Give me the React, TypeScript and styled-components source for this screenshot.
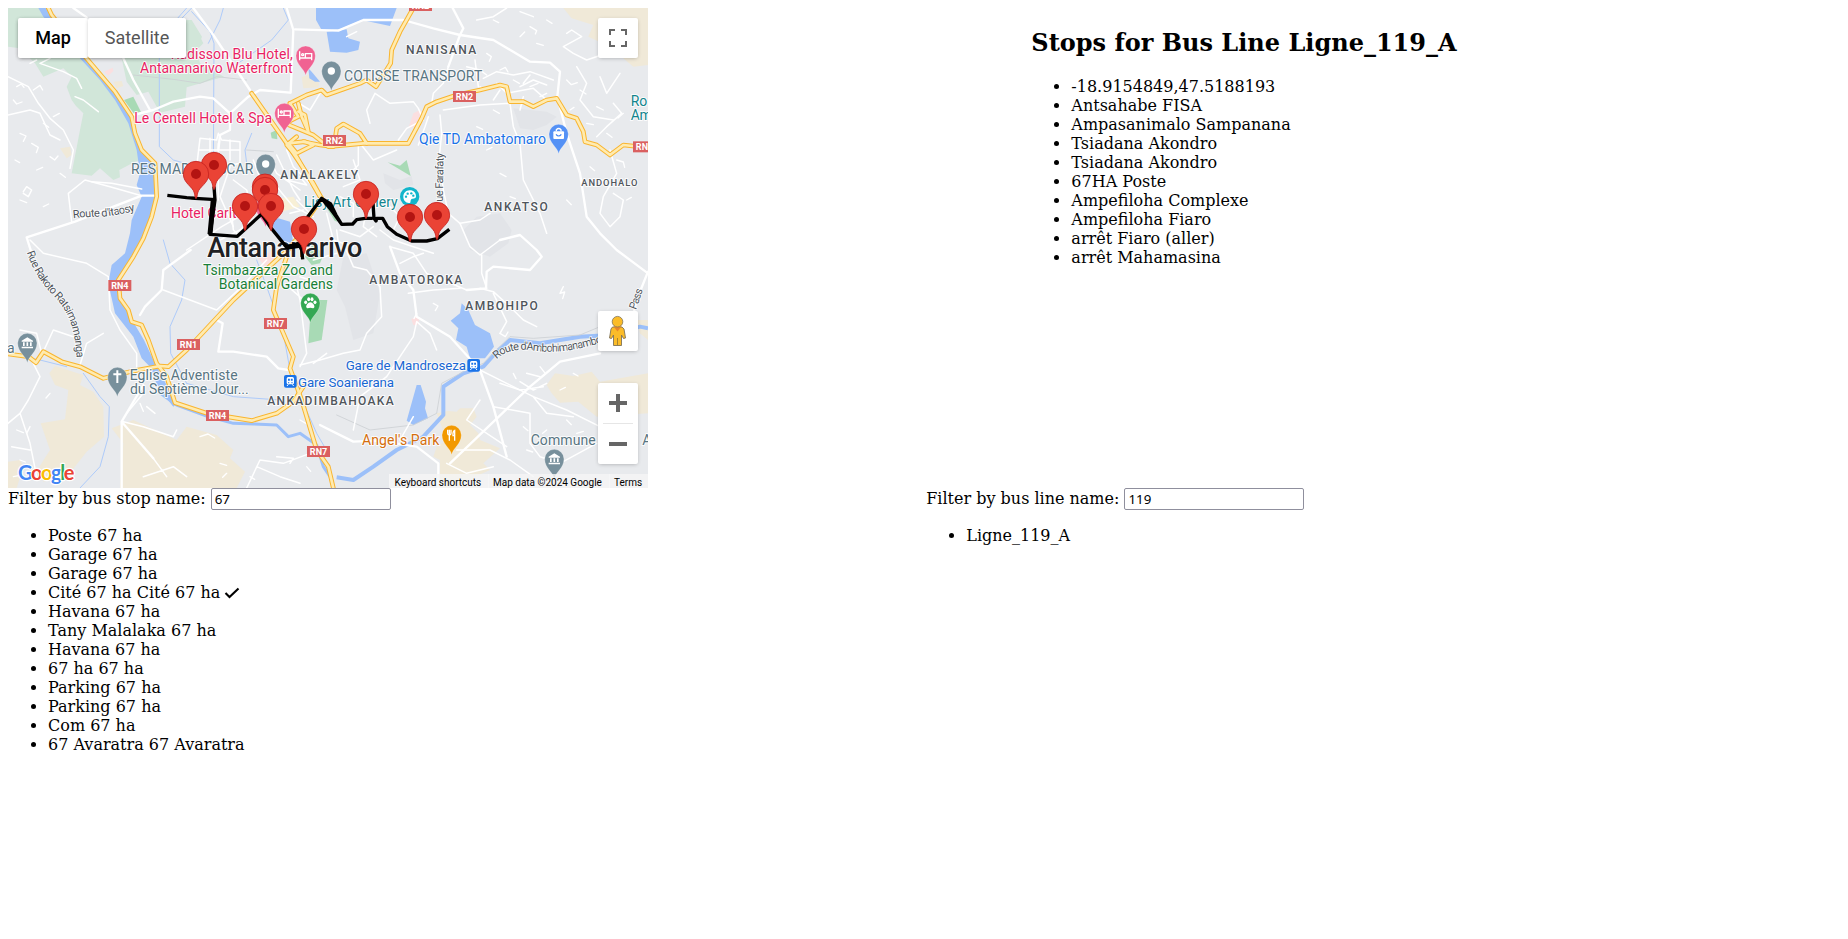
import React from "react";
import styled, { createGlobalStyle } from "styled-components";

const GlobalStyle = createGlobalStyle`
  body {
    margin: 8px;
    background: #fff;
    color: #000;
    font-family: "DejaVu Serif", serif;
    font-size: 16px;
    line-height: 19px;
  }
`;

const Row = styled.div`
  display: flex;
  align-items: flex-start;
`;

const CenteredColumn = styled.section`
  margin: 0 auto;
`;

const Column = styled.section``;

const Title = styled.h2`
  margin: 21px 0 20px;
  font-size: 24px;
  line-height: 28px;
  font-weight: 700;
`;

const List = styled.ul`
  margin: 16px 0;
  padding-left: 40px;
`;

const Item = styled.li`
  height: 19px;
  white-space: nowrap;
`;

const FilterLabel = styled.label`
  display: flex;
  align-items: flex-start;
  gap: 5px;
  height: 22px;
  line-height: 21px;
  white-space: nowrap;
`;

const FilterInput = styled.input`
  box-sizing: border-box;
  width: 180px;
  height: 22px;
  padding: 0 3px 1px;
  border: 1px solid #8f8f9d;
  border-radius: 2px;
  outline: 0;
  background: #fff;
  color: #000;
  font: 13.33px "Noto Sans", sans-serif;
`;

const CheckIcon = styled.svg`
  width: 16px;
  height: 16px;
  margin-left: 4px;
  vertical-align: -3px;
`;

const MapFrame = styled.div`
  position: relative;
  flex: none;
  width: 640px;
  height: 480px;
  overflow: hidden;
  background: #e8eaed;
  font-family: Roboto, sans-serif;
`;

const MapCanvas = styled.svg`
  display: block;
  width: 640px;
  height: 480px;
  font-family: Roboto, sans-serif;
`;

const MapControl = styled.div<{ $top: number; $height?: number }>`
  position: absolute;
  top: ${(p) => p.$top}px;
  right: 10px;
  display: flex;
  flex-direction: column;
  align-items: center;
  width: 40px;
  height: ${(p) => p.$height ?? 40}px;
  border-radius: 2px;
  background: #fff;
  box-shadow: 0 1px 4px -1px rgba(0, 0, 0, 0.3);
`;

const ControlIcon = styled.svg`
  flex: none;
  width: 40px;
  height: 40px;
`;

const ControlDivider = styled.div`
  flex: none;
  width: 30px;
  height: 1px;
  background: #e6e6e6;
`;

const TypeSwitch = styled.div`
  position: absolute;
  top: 10px;
  left: 10px;
  display: flex;
  height: 40px;
  border-radius: 2px;
  box-shadow: 0 1px 4px -1px rgba(0, 0, 0, 0.3);
`;

const TypeButton = styled.button<{ $active?: boolean; $width: number }>`
  width: ${(p) => p.$width}px;
  padding: 0 0 2px;
  border: 0;
  border-radius: 2px;
  background: #fff;
  box-shadow: 0 1px 4px -1px rgba(0, 0, 0, 0.3);
  color: ${(p) => (p.$active ? "#000" : "#565656")};
  font: ${(p) => (p.$active ? 500 : 400)} 18px Roboto, sans-serif;
`;

const Attribution = styled.div`
  position: absolute;
  right: 0;
  bottom: 0;
  display: flex;
  height: 14px;
  font-size: 10px;
  line-height: 17px;
`;

const AttributionCell = styled.span<{ $width: number }>`
  box-sizing: border-box;
  width: ${(p) => p.$width}px;
  height: 14px;
  padding-left: 5.5px;
  background: rgba(245, 245, 245, 0.8);
  box-shadow: inset 1px 0 rgba(255, 255, 255, 0.25);
  color: #000;
  white-space: nowrap;
`;

const busStops = [
  "-18.9154849,47.5188193",
  "Antsahabe FISA",
  "Ampasanimalo Sampanana",
  "Tsiadana Akondro",
  "Tsiadana Akondro",
  "67HA Poste",
  "Ampefiloha Complexe",
  "Ampefiloha Fiaro",
  "arrêt Fiaro (aller)",
  "arrêt Mahamasina",
];

const filteredStops = [
  { name: "Poste 67 ha" },
  { name: "Garage 67 ha" },
  { name: "Garage 67 ha" },
  { name: "Cité 67 ha Cité 67 ha", selected: true },
  { name: "Havana 67 ha" },
  { name: "Tany Malalaka 67 ha" },
  { name: "Havana 67 ha" },
  { name: "67 ha 67 ha" },
  { name: "Parking 67 ha" },
  { name: "Parking 67 ha" },
  { name: "Com 67 ha" },
  { name: "67 Avaratra 67 Avaratra" },
];

/* The map is drawn in units of a third of a pixel. */

const parks = [
  "M24 24H130L165 60L250 150L300 215L345 275L400 350L425 480L405 485L358 510L360 532L340 540L300 505L275 527L215 520L240 390L250 340L228 318L215 300L200 260L215 230L190 205L130 230L105 190L60 145L24 140Z",
  "M365 175L515 150L600 110L610 130L590 150L600 190L672 230L560 262L555 320L480 338L445 275L410 285L380 245Z",
  "M370 175H540V60L575 60L606 110L590 150L500 190L420 185Z",
];
const sands = [
  "M148 1120L165 1098L250 1125L240 1155L280 1175L310 1220L312 1310L260 1355L205 1425L130 1445L118 1400L150 1350L122 1270L195 1258L205 1170L165 1155Z",
  "M335 1285L400 1260L530 1320L560 1280L650 1305L700 1350L690 1375L735 1415L710 1464H360L370 1330Z",
  "M24 1385L60 1380L70 1400L50 1464H24Z",
  "M1690 24H1944V195L1900 200L1830 140L1765 110L1780 75L1715 55Z",
  "M1640 1155L1665 1120L1720 1128L1775 1115L1800 1145L1944 1120V1240L1790 1250L1735 1205L1680 1208L1655 1180Z",
  "M1310 1240L1345 1233L1370 1235L1380 1225L1420 1225L1430 1250L1410 1275L1435 1300L1440 1320L1500 1345L1450 1390L1470 1410L1350 1464H1320V1380L1300 1370L1310 1340L1340 1320Z",
  "M1910 960H1944V1020L1920 1000Z",
  "M180 445L210 440L215 465L200 475Z",
  "M340 245L365 243L370 258L350 265Z",
  "M905 232L935 220L957 250L955 262L910 265Z",
];
const greens = [
  "M372 300L400 290L425 340L405 345Z",
  "M812 398L830 390L832 418L815 415Z",
  "M1163 487L1200 497L1220 480L1232 528Z",
  "M955 900L982 900L965 1020L925 1030L930 960Z",
  "M915 770L940 730L970 765L960 790L935 795Z",
  "M978 620L990 625L1012 665L1004 662Z",
];
const shades = [
  "M1540 325L1640 335L1670 350L1640 375L1600 390L1560 385Z",
  "M1390 690L1430 650L1500 640L1535 690L1525 730L1470 770L1410 750Z",
  "M1030 770L1100 760L1140 880L1120 1000L1060 1020L1035 920L1010 870Z",
  "M1150 520L1200 540L1235 528L1240 555L1180 570L1155 550Z",
];
const water = [
  "M948 24H1190L1170 78L1085 60L1020 88L965 90L948 60Z",
  "M980 95L1040 88L1045 115L1080 125L1075 150L1040 158L990 155Z",
  "M925 205L935 215L960 245L945 245L928 235Z",
  "M808 665L835 655L870 665L880 730L850 725Z",
  "M1385 910L1405 930L1425 975L1470 1000L1482 1040L1455 1075L1410 1075L1400 1040L1368 1020L1375 985L1352 962L1380 940Z",
  "M1250 1155L1262 1155L1278 1205L1275 1225L1284 1255L1240 1275L1220 1262Z",
  "M115 24H145L155 45L210 115L268 185L345 275L395 350L405 400L425 450L465 490L470 590L455 650L430 715L400 770L355 840L360 895L375 910L402 970L432 1020L470 1100L530 1210L520 1220L475 1165L450 1100L425 1075L400 1010L345 940L325 850L335 795L375 760L390 700L395 660L425 590L410 555L420 520L410 450L385 370L345 300L300 240L240 175L190 115L130 50Z",
];
const rivers = [
  { d: "M475 1175L530 1215L620 1248L700 1270L760 1272L830 1275L865 1310L900 1300L950 1335L970 1400L990 1430", w: 9 },
  { d: "M1010 1432L1060 1440L1120 1400L1190 1350L1270 1310L1330 1245L1330 1160L1390 1120L1450 1100L1490 1055L1530 1020L1620 1030L1740 1010L1830 1005L1920 980L1944 985", w: 12 },
];
const streams = [
  "M575 35L630 95L642 130L640 500L645 625",
  "M575 24L478 125V440L520 480L590 500",
  "M560 24L475 120",
  "M850 24L865 60L815 120L700 200",
  "M740 490L735 450L755 400",
  "M490 720L510 790L555 840L545 900L510 980L512 1060L560 1150",
  "M560 1150L700 1190L840 1200",
  "M770 780L800 860L850 1000L870 1110",
  "M250 1120L300 1190L328 1220L325 1310L300 1400L240 1464",
  "M24 1060L120 1080L200 1100",
  "M910 1210L950 1300L985 1360",
  "M625 130L660 60L670 24",
];
const majorRoads = [
  "M220 24L260 52M370 175L400 240L450 330",
  "M400 345L460 330L520 305L600 290L640 295L690 340L745 290L780 270L870 278",
  "M580 24L640 105L750 270",
  "M860 24L880 90L872 278",
  "M885 88L1015 92L1090 60L1210 60L1300 85L1380 105L1480 120L1590 185L1650 188L1680 215L1672 290L1700 400L1740 520L1760 650L1800 700L1850 750L1944 820",
  "M1358 24L1390 85L1380 105L1345 200",
  "M470 587L425 587L225 665L80 712L95 760",
  "M572 750L490 810L485 870L435 920L420 945",
  "M650 960L668 970L655 1055L700 1055L800 1070L835 1105L865 1110",
  "M1170 740L1200 820L1240 870L1250 950L1350 1010L1440 1110L1480 1220L1520 1370",
  "M1944 815L1910 900L1900 945M1350 1390L1590 1160L1680 1085L1800 1060",
  "M960 1275L1010 1300L1060 1325L1130 1322L1250 1340L1315 1390V1464",
  "M690 340V390L660 405L655 450",
  "M1500 720L1560 705L1610 750L1625 770L1590 810L1480 800L1460 815L1458 865L1400 870",
  "M365 1265L430 1155M365 1265V1464M365 1265L460 1375",
];
const mediumRoads = [
  "M90 720L130 760L260 790L325 830L330 930L360 990L410 1060V1100",
  "M490 870L570 900L650 930L720 865L800 780",
  "M215 665L205 580L255 540L330 560L425 587",
  "M275 545L335 550L425 567",
  "M210 505L220 450L190 390L150 355L115 310L85 260L24 230",
  "M150 175L120 190L190 215L230 235L245 265M110 180L90 190M225 290L250 300L295 335",
  "M24 345L90 330L120 340L150 405L180 420M70 575L80 560L95 570L85 590L70 580",
  "M590 500L600 415L650 420L655 400L665 420L720 425V490L670 500L600 490M630 415V500M690 420V480M655 430V600M595 450H720",
  "M600 490L590 550M690 500L660 590L700 680",
  "M735 640L665 680L560 750M695 640L700 690L760 750M660 720L720 690L760 650",
  "M860 450L880 500L940 560M830 465L880 570L900 600M810 480L830 520L900 570M860 540L920 555L900 530",
  "M1075 435V495L1060 510M1255 435L1275 380L1285 350M1320 345L1325 400L1318 470L1330 570L1345 640L1380 670",
  "M1125 280L1100 330L1110 370M1125 280L1170 310L1240 305L1255 325L1270 360L1220 385L1195 420",
  "M1425 180L1435 260M1345 200L1330 250L1300 280L1295 310",
  "M1400 200L1440 210L1460 225M1330 330L1440 315L1530 310L1540 380L1560 430L1570 540L1620 640L1640 700",
  "M1450 235L1490 215L1540 225L1590 215L1660 240M1490 250L1520 280L1600 265L1640 300",
  "M1700 100L1715 90L1745 110L1690 140L1720 160L1760 180L1820 160M1730 200L1760 250L1740 300L1780 350L1840 360",
  "M1840 310L1865 340L1820 380L1790 410M1800 230L1820 280L1860 220",
  "M1830 450L1850 520L1810 590L1800 640L1830 680L1860 650L1870 600L1840 580",
  "M1380 670L1440 660L1470 640M1380 670L1410 740L1440 765L1500 720",
  "M1445 765V820L1460 865M1440 865L1480 875L1530 920L1570 960L1610 980M1480 880L1520 965L1500 1000",
  "M1030 730L1060 800L1100 810L1140 860L1145 950L1100 1000L1080 1050L1030 1060L960 1080L900 1095",
  "M1170 740L1240 760L1280 820L1400 870M1225 880L1300 870L1380 865M1200 790L1240 770L1270 760",
  "M1250 965L1240 1010L1160 1130L1080 1190L1060 1290M1250 965L1290 1000L1310 1050",
  "M1200 1320L1240 1250M1440 1110L1600 1190L1700 1230L1800 1280M1600 1190L1640 1240L1720 1250",
  "M1480 1220L1590 1240V1330L1620 1370L1680 1390L1790 1330M1440 1200L1400 1260L1520 1340",
  "M1560 1145L1600 1170L1640 1150M1580 1120L1620 1130M1500 1150L1560 1170L1630 1160",
  "M1340 1390L1400 1420L1480 1400M1370 1350L1470 1350L1530 1380L1600 1430",
  "M125 1060L110 1000L60 990M130 1055L160 990L220 1010M240 1095L260 1030L310 1000",
  "M100 1090L120 1130L85 1200L60 1240L24 1270M60 1240L90 1330L110 1430M35 1340L90 1350",
  "M370 1265L430 1280L520 1310L530 1290M380 1240L430 1180M440 1220L465 1240",
  "M460 1375L500 1430M430 1430L520 1400L560 1430M740 1464L780 1380L850 1390L930 1360M770 1400L840 1430L900 1450M830 1370L880 1375L870 1390",
  "M885 840L900 900L920 1060L900 1100M865 860L910 900M940 1090L980 1060",
  "M700 540L740 570L760 640M760 480L790 560M830 560L880 620L940 650M870 640L910 630",
  "M1020 590L1060 610L1060 650M1060 580L1100 620L1090 680L1130 710M1120 680L1080 710L1020 690",
  "M1140 690L1180 720L1240 740L1300 760M1170 620L1200 650L1180 690M1060 480L1080 540L1030 560",
  "M960 280L930 330L880 300M1040 110L1070 95M1430 60L1480 50L1520 24M1560 35L1600 50",
  "M1560 260L1600 240L1640 255M1570 290L1560 330M1590 225L1570 250M1500 270L1480 300",
  "M980 640L1000 720L1060 740M1010 690L1020 770M940 780L1010 760M1080 430L1120 480L1190 450M890 600L930 640M900 830L960 850",
];
const scatter = [
  "M50 260l14-8l8 10M40 300l10 12l16-6M100 270l20-14l8 14M60 400l18 8l-8 16M130 370l16 12M160 350l18-10M95 430l20 12l-6 16M45 480l14 8M150 470l14 10l10-12M110 510l18-8M180 520l16 12M60 600l20 8M130 620l16-8",
  "M1480 60l16 8M1590 80l20 12l-4 10M1640 60l16 10M1560 110l14-14M1610 130l20 6M1460 160l14 10l-6 14M1500 210l16-8l8 14M1540 240l18 10M1590 260l24-10M1440 260l14 10M1620 290l20-10M1480 330l18 10M1430 380l18 8M1460 450l16-8M1500 520l18 10M1530 590l16 6",
  "M1700 240l14 14l18-6M1740 270l18 12M1790 320l20 10M1710 330l12-8M1760 370l20 4M1820 400l16 12M1870 340l-16 14M1850 480l20 6l4 16M1770 500l14 12M1800 540l20 2M1700 600l14 14M1880 600l14-8",
  "M1690 860l-10 20l14-4l-6 20M1300 910l14 8l-8 14M1250 940l-8 16M1500 1000l16 10l8-14M1540 1120l8 16M1620 1100l14 18M1680 1170l16-8M1720 1120l14 8M1570 1280l14 12M1640 1290l-12 10M1700 1260l14 14M1730 1300l20-6M1580 1350l18 6",
  "M50 1290l20 8M90 1280l-10 20M60 1380l16 6M40 1430l20-4M150 1180l-12 14M420 1210l10 24M520 1190l10 12M600 1310l24-8l20 12M660 1390l20 6M680 1420l-12 12M750 1430l14 8M920 1400l12 14M900 1260l28 16",
];
const highways = [
  "M145 24L155 45L210 115L268 185L345 275L395 350L405 400L425 450L465 490L470 590L455 650L430 715L400 770L355 840L360 895L385 930L395 965L425 975L445 1020L470 1090L500 1130L525 1208L620 1240L755 1262L830 1240L880 1205L910 1160",
  "M24 1062L85 1070L108 1088L130 1055L185 1085L240 1100L310 1135L390 1115L480 1098L505 1100L560 1050L700 900L840 770L870 745",
  "M860 770L830 860L820 930L850 1000L880 1070L870 1105L905 1200L950 1350L985 1400L1000 1464",
  "M755 280L860 430L940 550L965 595",
  "M890 410L860 435L890 470L925 530L960 590",
  "M870 310L920 285L965 270L980 285L1080 250L1100 240L1128 260L1172 190L1175 150L1200 95L1240 24",
  "M870 310L895 350L855 370L940 405L985 440L1090 430L1225 430L1265 355L1280 320L1310 305L1370 285L1440 270L1500 255L1520 260L1530 305L1570 305L1600 320L1640 300L1670 295L1700 345L1730 355L1750 395L1755 425L1790 435L1830 465L1870 435L1944 443",
  "M1005 420L1010 385L1030 372L1080 400L1100 430",
  "M865 430L915 425L940 435L890 460Z",
  "M1000 440L960 435L910 425",
  "M895 310L905 350L925 395L915 345L895 335",
  "M920 660L965 595M870 740L905 700",
];

const busRoute =
  "M502 586L560 593L585 595L635 598L648 600M642 560L645 600L630 703L712 709L785 642L810 680L860 742L895 730L905 750L908 778M905 750L900 690L920 655L965 595L990 625L1025 673L1058 672L1070 659L1095 655L1118 655M965 595L992 612L1008 645L1025 673M1119 610L1122 655L1128 663L1130 655L1148 655L1162 680L1190 703L1235 723L1280 723L1312 716L1348 688";

const shields = [
  { text: "RN2", x: 1227, y: 0 },
  { text: "RN2", x: 1359, y: 273 },
  { text: "RN2", x: 969, y: 405 },
  { text: "RN2", x: 1899, y: 424 },
  { text: "RN4", x: 325, y: 840 },
  { text: "RN1", x: 531, y: 1017 },
  { text: "RN7", x: 792, y: 954 },
  { text: "RN4", x: 618, y: 1230 },
  { text: "RN7", x: 921, y: 1338 },
];

type MapLabel = { text: string; x: number; to: number; y: number; size?: number; color: string; weight?: number };

const PINK = "#e91e63";
const SLATE = "#587582";
const TEAL = "#12858d";
const AREA = "#4f555b";

const labels: MapLabel[] = [
  { text: "Radisson Blu Hotel,", x: 512, to: 878, y: 178, color: PINK },
  { text: "Antananarivo Waterfront", x: 420, to: 878, y: 219, color: PINK },
  { text: "Le Centell Hotel & Spa", x: 403, to: 816, y: 370, color: PINK },
  { text: "RES MADAGASCAR", x: 393, to: 760, y: 522, color: SLATE },
  { text: "Hotel Carlton", x: 513, to: 756, y: 655, color: PINK },
  { text: "Lisy Art Gallery", x: 912, to: 1193, y: 621, color: TEAL },
  { text: "COTISSE TRANSPORT", x: 1032, to: 1447, y: 243, color: SLATE },
  { text: "Qie TD Ambatomaro", x: 1257, to: 1638, y: 433, color: "#1a73e8" },
  { text: "Ro", x: 1892, to: 1942, y: 318, color: TEAL },
  { text: "Am", x: 1892, to: 1955, y: 360, color: TEAL },
  { text: "Tsimbazaza Zoo and", x: 609, to: 999, y: 826, color: "#188038" },
  { text: "Botanical Gardens", x: 656, to: 999, y: 868, color: "#188038" },
  { text: "Eglise Adventiste", x: 389, to: 713, y: 1141, color: SLATE },
  { text: "du Septième Jour...", x: 390, to: 746, y: 1183, color: SLATE },
  { text: "a", x: 21, to: 42, y: 1058, color: SLATE },
  { text: "Gare Soanierana", x: 894, to: 1182, y: 1160, color: "#1967d2", size: 40 },
  { text: "Gare de Mandroseza", x: 1037, to: 1398, y: 1109, color: "#1967d2", size: 40 },
  { text: "Angel's Park", x: 1086, to: 1318, y: 1336, color: "#d56e0c" },
  { text: "Commune", x: 1592, to: 1787, y: 1336, color: SLATE },
  { text: "A", x: 1927, to: 1955, y: 1336, color: SLATE },
  { text: "NANISANA", x: 1218, to: 1429, y: 161, color: AREA, size: 36, weight: 500 },
  { text: "ANALAKELY", x: 841, to: 1074, y: 538, color: AREA, size: 36, weight: 500 },
  { text: "ANKATSO", x: 1453, to: 1643, y: 634, color: AREA, size: 36, weight: 500 },
  { text: "ANDOHALO", x: 1744, to: 1912, y: 559, color: AREA, size: 28, weight: 500 },
  { text: "AMBATOROKA", x: 1108, to: 1387, y: 853, color: AREA, size: 36, weight: 500 },
  { text: "AMBOHIPO", x: 1396, to: 1613, y: 931, color: AREA, size: 36, weight: 500 },
  { text: "ANKADIMBAHOAKA", x: 802, to: 1181, y: 1216, color: AREA, size: 36, weight: 500 },
  { text: "Antananarivo", x: 622, to: 1087, y: 772, color: "#202124", size: 81, weight: 500 },
];

const streetNames = [
  { id: "itaosy", d: "M220 655Q260 650 300 650T412 630", text: "Route d'Itaosy", length: 188 },
  { id: "rakoto", d: "M80 757C110 840 145 870 172 900C208 942 225 985 230 1080", text: "Rue Rakoto Ratsimamanga", length: 358 },
  { id: "farafaty", d: "M1328 605L1331 456", text: "ue Farafaty", length: 146 },
  { id: "ambohimanambola", d: "M1490 1078Q1520 1045 1590 1050Q1690 1070 1840 1015", text: "Route d'Ambohimanambola", length: 350 },
  { id: "pass", d: "M1908 930L1932 860", text: "Pass", length: 64 },
];

const markers = [
  { x: 642, y: 495 },
  { x: 588, y: 522 },
  { x: 795, y: 560 },
  { x: 795, y: 570 },
  { x: 1098, y: 582 },
  { x: 735, y: 618 },
  { x: 813, y: 618 },
  { x: 1311, y: 645 },
  { x: 1230, y: 651 },
  { x: 912, y: 687 },
];

const glyphs: Record<string, React.ReactNode> = {
  bed: (
    <g fill="none" stroke="#fff" strokeWidth="4">
      <path d="M-18 -13V14M-18 7H18V14M18 7V-6H-1V7" />
      <circle cx="-9" cy="-3" r="3" />
    </g>
  ),
  dot: <circle r="11" fill="#fff" />,
  bag: (
    <g>
      <rect x="-16" y="-8" width="32" height="23" rx="3" fill="#fff" />
      <path d="M-7 -8V-13Q0 -20 7 -13V-8" fill="none" stroke="#fff" strokeWidth="4" />
      <path d="M-8 1Q0 11 8 1" fill="none" stroke="#4285f4" strokeWidth="3.5" />
    </g>
  ),
  paw: (
    <g fill="#fff">
      <ellipse cx="-14" cy="-2" rx="4.5" ry="5.5" />
      <ellipse cx="-5" cy="-11" rx="4.5" ry="6" />
      <ellipse cx="5" cy="-11" rx="4.5" ry="6" />
      <ellipse cx="14" cy="-2" rx="4.5" ry="5.5" />
      <path d="M0 -2C7 -2 14 8 12 13S4 14 0 14S-10 18 -12 13S-7 -2 0 -2Z" />
    </g>
  ),
  museum: (
    <path d="M-17 -7L0 -17L17 -7V-4H-17ZM-13 -2h5V9h-5ZM-2.500 -2h5V9h-5ZM8 -2h5V9h-5ZM-17 11H17V16H-17Z" fill="#fff" />
  ),
  cross: <path d="M0 -20V18M-12 -8H12" stroke="#fff" strokeWidth="6" />,
  fork: (
    <path d="M-12 -16V-5Q-12 0 -7 0V17M-7 -16V0M-2 -16V-5Q-2 0 -7 0M9 17V-14Q3 -12 4 2H9" fill="none" stroke="#fff" strokeWidth="4" />
  ),
};

const places = [
  { x: 917, y: 167, color: "#f06292", glyph: "bed" },
  { x: 853, y: 339, color: "#f06292", glyph: "bed" },
  { x: 797, y: 622, color: "#f06292", glyph: "bed" },
  { x: 797, y: 492, color: "#78909c", glyph: "dot" },
  { x: 994, y: 213, color: "#78909c", glyph: "dot" },
  { x: 1676, y: 402, color: "#5491f5", glyph: "bag" },
  { x: 931, y: 909, color: "#34a853", glyph: "paw" },
  { x: 82, y: 1029, color: "#78909c", glyph: "museum" },
  { x: 352, y: 1131, color: "#78909c", glyph: "cross" },
  { x: 1355, y: 1305, color: "#f29900", glyph: "fork" },
  { x: 1663, y: 1377, color: "#78909c", glyph: "museum" },
];

const stations = [
  { x: 871, y: 1144 },
  { x: 1421, y: 1096 },
];

const logoLetters = [
  ["G", "#4285f4"],
  ["o", "#ea4335"],
  ["o", "#fbbc04"],
  ["g", "#4285f4"],
  ["l", "#34a853"],
  ["e", "#ea4335"],
];

function Lines({ paths, color, width }: { paths: string[]; color: string; width: number }) {
  return (
    <g fill="none" stroke={color} strokeWidth={width} strokeLinejoin="round" strokeLinecap="round">
      {paths.map((d) => (
        <path key={d} d={d} />
      ))}
    </g>
  );
}

function Areas({ paths, color }: { paths: string[]; color: string }) {
  return (
    <g fill={color}>
      {paths.map((d) => (
        <path key={d} d={d} />
      ))}
    </g>
  );
}

function PlacePin({ x, y, color, glyph }: { x: number; y: number; color: string; glyph: string }) {
  return (
    <g transform={`translate(${x} ${y})`}>
      <path
        d="M0 59C-4 39 -29 28 -29 0A29 29 0 0 1 29 0C29 28 4 39 0 59Z"
        fill={color}
        stroke="#fff"
        strokeOpacity=".5"
        strokeWidth="1.500"
      />
      {glyphs[glyph]}
    </g>
  );
}

function StopMarker({ x, y }: { x: number; y: number }) {
  return (
    <g transform={`translate(${x} ${y})`}>
      <path
        d="M0 74C-3 70 -4 62 -5 57C-9 38 -38 28 -38 0A38 38 0 0 1 38 0C38 28 9 38 5 57C4 62 3 70 0 74Z"
        fill="#ea4335"
        stroke="#c5221f"
        strokeWidth="2.500"
      />
      <circle r="15" fill="#b31412" />
    </g>
  );
}

function MapDrawing() {
  return (
    <MapCanvas viewBox="24 24 1920 1440">
      <Areas paths={shades} color="#e2e4e8" />
      <Areas paths={parks} color="#d1e6d9" />
      <Areas paths={sands} color="#f0e9d8" />
      <Areas paths={greens} color="#a8dab5" />
      <Areas paths={["M1225 385L1240 340L1260 330L1265 335L1245 380ZM312 215L338 203L340 213L325 227ZM1234 958L1248 950L1258 958L1252 975H1240ZM775 775L830 745L850 755L795 800Z"]} color="#fbdfe0" />
      <Areas paths={["M770 650L800 600L880 590L900 620L830 640L800 660Z"]} color="#f8f0d6" />
      <Areas paths={water} color="#9cc0f9" />
      {rivers.map((river) => (
        <path key={river.d} d={river.d} fill="none" stroke="#9cc0f9" strokeWidth={river.w} strokeLinejoin="round" />
      ))}
      <Lines paths={streams} color="#aecbfa" width={3} />
      <Lines
        paths={[
          "M400 225L520 238L600 250L650 230L740 240",
          "M1010 1245L1110 1290L1240 1275L1310 1240L1325 1150L1400 1110L1450 1090L1530 1010L1600 1015L1740 1005L1800 980",
          "M740 450L820 455",
        ]}
        color="#cdd0d4"
        width={2.5}
      />
      <Lines paths={scatter} color="#fff" width={4} />
      <Lines paths={mediumRoads} color="#fff" width={4.5} />
      <Lines paths={majorRoads} color="#fff" width={7} />
      <Lines paths={highways} color="#f9b52f" width={14} />
      <Lines paths={highways} color="#ffebb0" width={8} />

      {streetNames.map((street) => (
        <g key={street.id}>
          <path id={street.id} d={street.d} fill="none" />
          <text fontSize="33" fill="#4f555b" stroke="#fff" strokeOpacity=".8" strokeWidth="5" paintOrder="stroke">
            <textPath href={`#${street.id}`} textLength={street.length}>
              {street.text}
            </textPath>
          </text>
        </g>
      ))}

      {shields.map((shield) => (
        <g key={`${shield.x}-${shield.y}`}>
          <rect x={shield.x} y={shield.y} width="69" height="33" fill="#da6060" />
          <text x={shield.x + 34.5} y={shield.y + 26} textAnchor="middle" fontSize="27" fontWeight="700" fill="#fff">
            {shield.text}
          </text>
        </g>
      ))}

      {places.map((place) => (
        <PlacePin key={`${place.x}-${place.y}`} {...place} />
      ))}

      <g transform="translate(1229 590)">
        <circle r="29" fill="#12b5cb" />
        <path d="M0 -19C13 -19 19 -11 19 -1C19 9 7 4 4 9S5 19 -2 19C-13 18 -19 10 -19 0S-11 -19 0 -19Z" fill="#fff" />
        <g fill="#12b5cb">
          <circle cx="-11" cy="0" r="3.500" />
          <circle cx="-6" cy="-9" r="3.500" />
          <circle cx="5" cy="-10" r="3.500" />
          <circle cx="11" cy="-3" r="3.500" />
        </g>
      </g>

      {stations.map((station) => (
        <g key={station.x} transform={`translate(${station.x} ${station.y})`}>
          <rect x="-19" y="-19" width="38" height="38" rx="6" fill="#1a73e8" />
          <rect x="-11" y="-13" width="22" height="22" rx="5" fill="#fff" />
          <path d="M-7 -8H-1.500V-2H-7ZM1.500 -8H7V-2H1.500Z" fill="#1a73e8" />
          <circle cx="-5" cy="4" r="2" fill="#1a73e8" />
          <circle cx="5" cy="4" r="2" fill="#1a73e8" />
          <path d="M-6 9L-10 14M6 9L10 14" stroke="#fff" strokeWidth="3" />
        </g>
      ))}

      {labels.map((label) => (
        <text
          key={`${label.text}-${label.x}`}
          x={label.x}
          y={label.y}
          textLength={label.to - label.x}
          fontSize={label.size ?? 42}
          fontWeight={label.weight ?? 400}
          fill={label.color}
          stroke="#fff"
          strokeOpacity=".85"
          strokeWidth="6"
          strokeLinejoin="round"
          paintOrder="stroke"
        >
          {label.text}
        </text>
      ))}

      <path d={busRoute} fill="none" stroke="#000" strokeWidth="10" strokeLinejoin="round" />
      <path d="M640 598L630 703M582 590V598M860 742L905 735" fill="none" stroke="#000" strokeWidth="15" />

      {markers.map((marker) => (
        <StopMarker key={`${marker.x}-${marker.y}`} {...marker} />
      ))}

      <text
        x="54"
        y="1441"
        textLength="169"
        fontFamily="Lato, sans-serif"
        fontSize="60"
        fontWeight="700"
        stroke="#fff"
        strokeWidth="7"
        strokeLinejoin="round"
        paintOrder="stroke"
      >
        {logoLetters.map(([letter, color], i) => (
          <tspan key={i} fill={color}>
            {letter}
          </tspan>
        ))}
      </text>
    </MapCanvas>
  );
}

function BusMap() {
  return (
    <MapFrame>
      <MapDrawing />
      <TypeSwitch>
        <TypeButton $active $width={70}>
          Map
        </TypeButton>
        <TypeButton $width={98}>Satellite</TypeButton>
      </TypeSwitch>
      <MapControl $top={10}>
        <ControlIcon viewBox="0 0 40 40">
          <path d="M12 17V12H17M23 12H28V17M28 23V28H23M17 28H12V23" fill="none" stroke="#666" strokeWidth="2" />
        </ControlIcon>
      </MapControl>
      <MapControl $top={303}>
        <ControlIcon viewBox="0 0 40 40">
          <path
            d="M14.500 16H24L26 18L27.500 27L25.500 27.500L23.500 24V34.500H15.500V24L13.500 27.500L11.500 27L13 18Z"
            fill="#fbbc29"
            stroke="#7f7358"
            strokeWidth=".9"
            strokeLinejoin="round"
          />
          <path d="M19.500 27V34.500" stroke="#a98530" />
          <path d="M15.500 15.500L19.500 20.500L23.500 15.500Z" fill="#e9862b" />
          <circle cx="19.500" cy="10.700" r="5.300" fill="#fbbc29" stroke="#7f7358" strokeWidth=".8" />
        </ControlIcon>
      </MapControl>
      <MapControl $top={375} $height={81}>
        <ControlIcon viewBox="0 0 40 40">
          <path d="M11 20H29M20 11V29" stroke="#666" strokeWidth="4" />
        </ControlIcon>
        <ControlDivider />
        <ControlIcon viewBox="0 0 40 40">
          <path d="M11 20H29" stroke="#666" strokeWidth="4" />
        </ControlIcon>
      </MapControl>
      <Attribution>
        <AttributionCell $width={98.5}>Keyboard shortcuts</AttributionCell>
        <AttributionCell $width={121}>Map data ©2024 Google</AttributionCell>
        <AttributionCell $width={39.5}>Terms</AttributionCell>
      </Attribution>
    </MapFrame>
  );
}

export default function App() {
  return (
    <>
      <GlobalStyle />
      <Row>
        <BusMap />
        <CenteredColumn>
          <Title>Stops for Bus Line Ligne_119_A</Title>
          <List>
            {busStops.map((stop, i) => (
              <Item key={i}>{stop}</Item>
            ))}
          </List>
        </CenteredColumn>
      </Row>
      <Row>
        <Column>
          <FilterLabel>
            Filter by bus stop name:
            <FilterInput defaultValue="67" />
          </FilterLabel>
          <List>
            {filteredStops.map((stop, i) => (
              <Item key={i}>
                {stop.name}
                {stop.selected && (
                  <CheckIcon viewBox="0 0 16 16">
                    <path d="M1.500 8L5.500 12L14.500 3.500" fill="none" stroke="#000" strokeWidth="2.100" />
                  </CheckIcon>
                )}
              </Item>
            ))}
          </List>
        </Column>
        <CenteredColumn>
          <FilterLabel>
            Filter by bus line name:
            <FilterInput defaultValue="119" />
          </FilterLabel>
          <List>
            <Item>Ligne_119_A</Item>
          </List>
        </CenteredColumn>
      </Row>
    </>
  );
}
